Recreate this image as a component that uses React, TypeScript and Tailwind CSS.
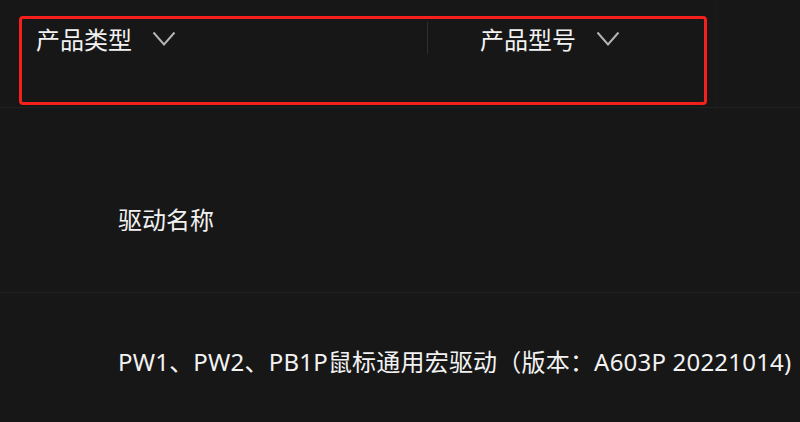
export default function App() {
  return (
    <div
      className="w-[800px] h-[422px] overflow-hidden bg-[#171717] text-[#f2f2f2]"
      style={{ fontFamily: '"Noto Sans", "Noto Sans CJK SC", sans-serif' }}
    >
      {/* Filter bar */}
      <div className="h-[108px] border-b border-[#222222]">
        <div className="w-[716px] h-full border-r border-[#1b1b1b] pt-4 pl-[19px]">
          <div className="w-[688px] h-[89px] border-[3px] border-[#f5201c] rounded-[4px] flex">
            <div className="w-[405px] flex items-start pl-[14px] pt-[5px] gap-[20px]">
              <span className="text-[24px] leading-[32px]">产品类型</span>
              <Chevron />
            </div>
            <div className="w-px h-[32px] mt-[3px] bg-[#2e2e2e]" />
            <div className="flex items-start pl-[52px] pt-[5px] gap-[20px]">
              <span className="text-[24px] leading-[32px]">产品型号</span>
              <Chevron />
            </div>
          </div>
        </div>
      </div>

      {/* Table head */}
      <div className="h-[185px] border-b border-[#222222] pl-[118px] pt-[96px]">
        <span className="text-[24px] leading-[32px]">驱动名称</span>
      </div>

      {/* Row */}
      <div className="pl-[118px] pt-[53px]">
        <span className="text-[24px] leading-[32px] tracking-[0.2px] whitespace-nowrap">
          PW1、PW2、PB1P鼠标通用宏驱动（版本：A603P 20221014)
        </span>
      </div>
    </div>
  );
}

function Chevron() {
  return (
    <svg width="24" height="16" viewBox="0 0 24 16" className="mt-[7px]">
      <path d="M1.5 1.5 L12 13.5 L22.5 1.5" fill="none" stroke="#b4b4b4" strokeWidth="2" />
    </svg>
  );
}
